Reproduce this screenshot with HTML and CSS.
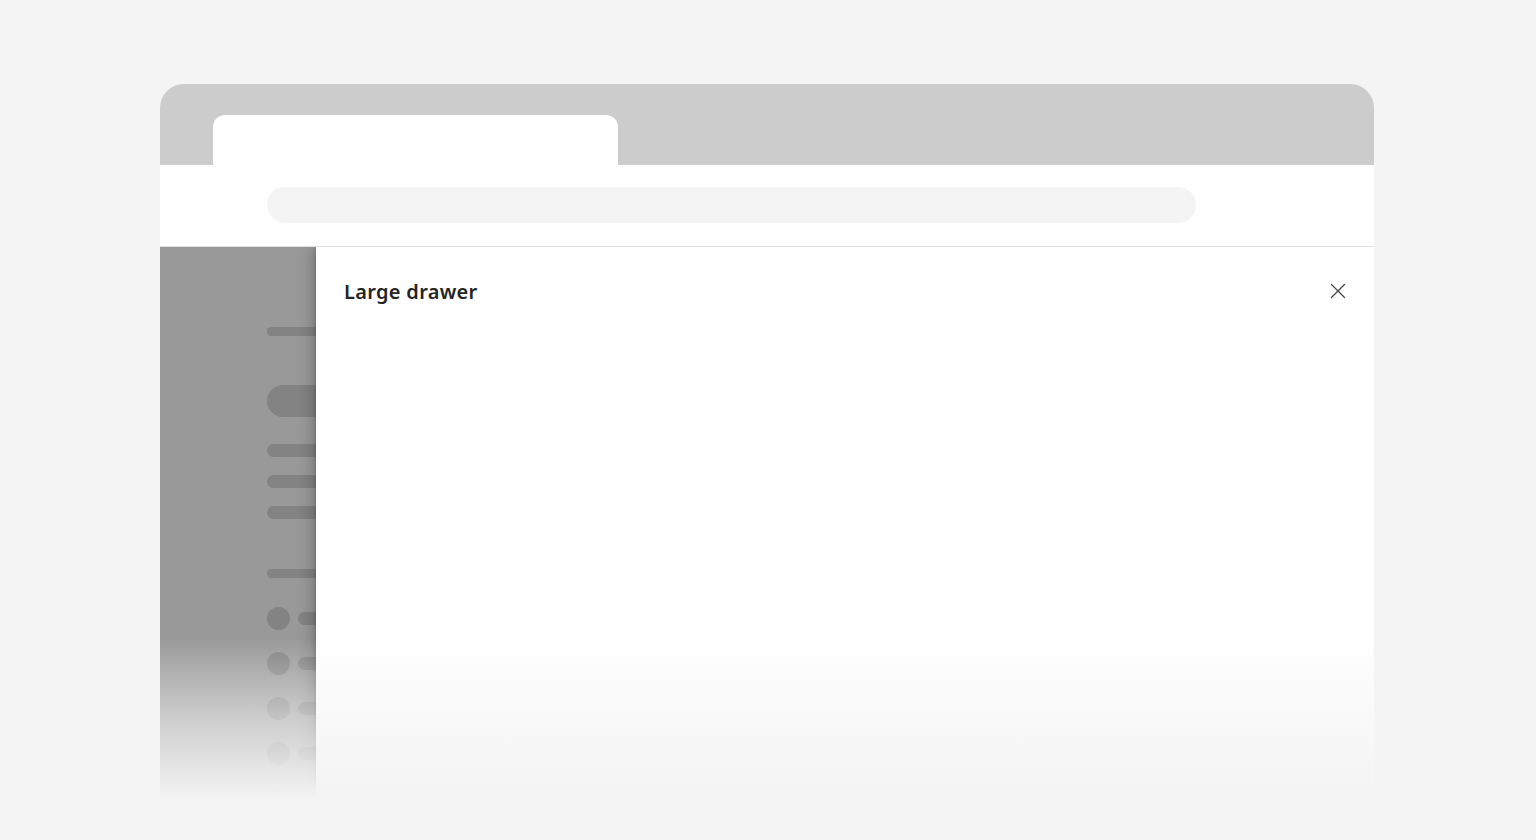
FILE: index.html
```html
<!DOCTYPE html>
<html lang="en">
  <head>
    <meta charset="UTF-8" />
    <meta name="viewport" content="width=device-width, initial-scale=1.0" />
    <title>Large drawer</title>
    <link rel="stylesheet" href="styles.css">
  </head>
  <body>
    <div class="window">
      <div class="tab-bar">
        <div class="tab"></div>
      </div>
      <div class="toolbar">
        <div class="address-bar"></div>
      </div>

      <div class="content">
        <!-- page behind the drawer, dimmed -->
        <div class="page">
          <div class="sk sk-title"></div>
          <div class="sk sk-pill"></div>
          <div class="sk sk-line first"></div>
          <div class="sk sk-line"></div>
          <div class="sk sk-line"></div>
          <div class="sk sk-title section"></div>
          <div class="sk-row first"><span class="sk-dot"></span><span class="sk sk-short"></span></div>
          <div class="sk-row"><span class="sk-dot"></span><span class="sk sk-short"></span></div>
          <div class="sk-row"><span class="sk-dot"></span><span class="sk sk-short"></span></div>
          <div class="sk-row"><span class="sk-dot"></span><span class="sk sk-short"></span></div>
          <div class="sk-row"><span class="sk-dot"></span><span class="sk sk-short"></span></div>
        </div>

        <div class="drawer">
          <div class="drawer-header">
            <h2>Large drawer</h2>
            <button class="close-btn" aria-label="Close">
              <svg width="16" height="16" viewBox="0 0 16 16">
                <path d="M1.5 1.5 L14.5 14.5 M14.5 1.5 L1.5 14.5" stroke="#424242" stroke-width="1.2" stroke-linecap="round" fill="none" />
              </svg>
            </button>
          </div>
        </div>
      </div>

      <div class="fade"></div>
    </div>
  </body>
</html>
```

FILE: styles.css
```css
body {
  margin: 0;
  background-color: #f4f4f4;
  font-family: "Noto Sans", "Open Sans", sans-serif;
  color: #242424;
}
.window {
  position: relative;
  margin: 84px 0 0 160px;
  width: 1214px;
  height: 724px;
  border-radius: 24px 24px 0 0;
  overflow: hidden;
  display: flex;
  flex-direction: column;
}
.tab-bar {
  height: 81px;
  box-sizing: border-box;
  padding: 31px 0 0 53px;
  background-color: #cccccc;
  flex-shrink: 0;
}
.tab {
  width: 405px;
  height: 50px;
  background-color: #fff;
  border-radius: 12px 12px 0 0;
}
.toolbar {
  height: 82px;
  box-sizing: border-box;
  padding: 22px 0 0 107px;
  background-color: #fff;
  border-bottom: 1px solid #e0e0e0;
  flex-shrink: 0;
}
.address-bar {
  width: 929px;
  height: 36px;
  border-radius: 18px;
  background-color: #f4f4f4;
}
.content {
  flex: 1;
  display: flex;
  min-height: 0;
  overflow: hidden;
}
.page {
  width: 156px;
  flex-shrink: 0;
  box-sizing: border-box;
  padding: 80px 0 0 107px;
  background-color: #999999;
  overflow: hidden;
  display: flex;
  flex-direction: column;
}
.sk {
  display: block;
  background-color: #838383;
  flex-shrink: 0;
}
.sk-title {
  width: 160px;
  height: 9px;
  border-radius: 5px;
}
.sk-title.section {
  margin-top: 50px;
}
.sk-pill {
  width: 200px;
  height: 32px;
  border-radius: 16px;
  margin-top: 49px;
}
.sk-line {
  width: 300px;
  height: 13px;
  border-radius: 7px;
  margin-top: 18px;
}
.sk-line.first {
  margin-top: 27px;
}
.sk-row {
  display: flex;
  align-items: center;
  gap: 8px;
  margin-top: 22px;
  flex-shrink: 0;
}
.sk-row.first {
  margin-top: 29px;
}
.sk-dot {
  width: 23px;
  height: 23px;
  border-radius: 50%;
  background-color: #838383;
  flex-shrink: 0;
}
.sk-short {
  width: 120px;
  height: 13px;
  border-radius: 7px;
}
.drawer {
  flex: 1;
  background-color: #fff;
  box-shadow: -4px 0 14px rgba(0, 0, 0, 0.22), -1px 0 2px rgba(0, 0, 0, 0.12);
  position: relative;
}
.drawer-header {
  display: flex;
  align-items: center;
  justify-content: space-between;
  padding: 31px 24px 0 28px;
}
.drawer-header h2 {
  margin: 0;
  font-size: 20px;
  font-weight: 600;
  letter-spacing: 0.3px;
  line-height: 28px;
  color: #242424;
}
.close-btn {
  width: 24px;
  height: 24px;
  padding: 0;
  border: none;
  background: none;
  display: flex;
  align-items: center;
  justify-content: center;
  margin-top: -2px;
}
.fade {
  position: absolute;
  left: 0;
  right: 0;
  bottom: 0;
  height: 170px;
  background: linear-gradient(to bottom, rgba(244, 244, 244, 0) 0%, rgba(244, 244, 244, 0.55) 45%, #f4f4f4 95%);
  pointer-events: none;
}
```
